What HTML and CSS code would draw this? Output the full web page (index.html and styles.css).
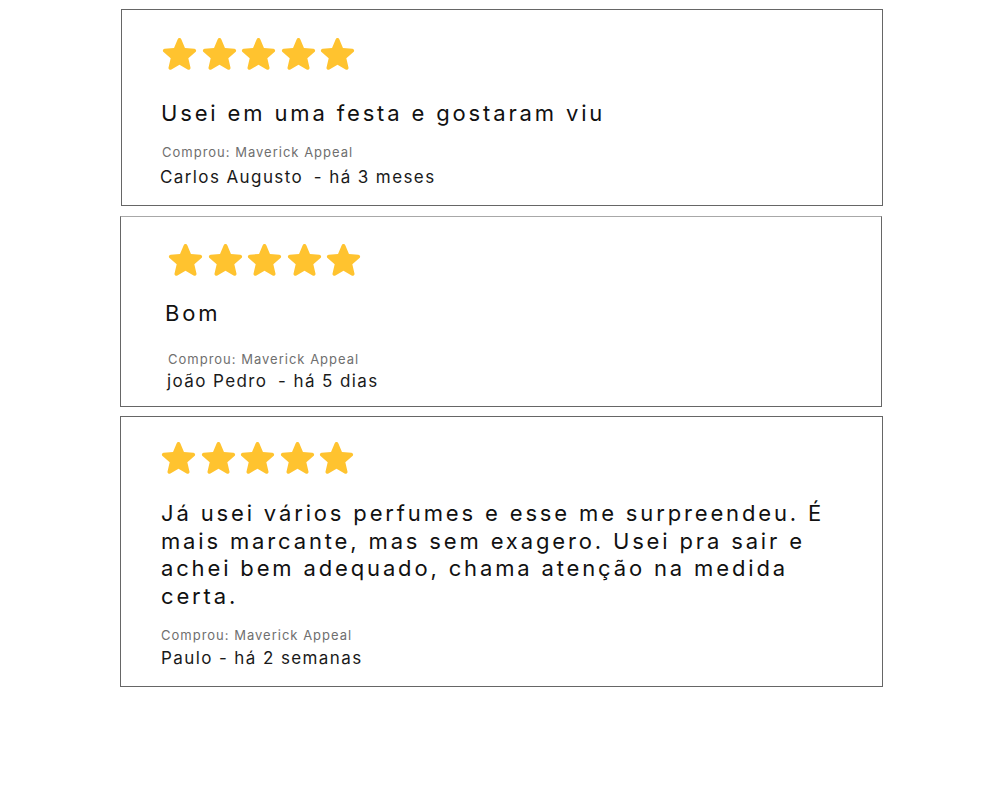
FILE: index.html
```html
<!DOCTYPE html>
<html lang="pt-BR">
<head>
<meta charset="utf-8">
<title>Avaliações</title>
<link rel="stylesheet" href="styles.css">
</head>
<body>
<svg class="defs" width="0" height="0" aria-hidden="true">
  <defs>
    <symbol id="star" viewBox="3 2 18 18">
      <path d="M12 17.27l4.15 2.51c.76.46 1.69-.22 1.49-1.08l-1.1-4.72 3.67-3.18c.67-.58.31-1.68-.57-1.75l-4.83-.41-1.89-4.46c-.34-.81-1.5-.81-1.840 0L9.19 8.63l-4.83.41c-.88.07-1.24 1.17-.57 1.75l3.67 3.18-1.1 4.72c-.2.86.73 1.54 1.49 1.08l4.15-2.5z"/>
    </symbol>
  </defs>
</svg>
<main class="reviews">
  <article class="review review--one">
    <div class="stars">
      <svg class="star"><use href="#star"/></svg>
      <svg class="star"><use href="#star"/></svg>
      <svg class="star"><use href="#star"/></svg>
      <svg class="star"><use href="#star"/></svg>
      <svg class="star"><use href="#star"/></svg>
    </div>
    <p class="review-text">Usei em uma festa e gostaram viu</p>
    <p class="bought">Comprou: Maverick Appeal</p>
    <p class="author">Carlos Augusto&thinsp; - há 3 meses</p>
  </article>
  <article class="review review--two">
    <div class="stars">
      <svg class="star"><use href="#star"/></svg>
      <svg class="star"><use href="#star"/></svg>
      <svg class="star"><use href="#star"/></svg>
      <svg class="star"><use href="#star"/></svg>
      <svg class="star"><use href="#star"/></svg>
    </div>
    <p class="review-text">Bom</p>
    <p class="bought">Comprou: Maverick Appeal</p>
    <p class="author">joão Pedro&thinsp; - há 5 dias</p>
  </article>
  <article class="review review--three">
    <div class="stars">
      <svg class="star"><use href="#star"/></svg>
      <svg class="star"><use href="#star"/></svg>
      <svg class="star"><use href="#star"/></svg>
      <svg class="star"><use href="#star"/></svg>
      <svg class="star"><use href="#star"/></svg>
    </div>
    <p class="review-text">Já usei vários perfumes e esse me surpreendeu. É mais marcante, mas sem exagero. Usei pra sair e achei bem adequado, chama atenção na medida certa.</p>
    <p class="bought">Comprou: Maverick Appeal</p>
    <p class="author">Paulo - há 2 semanas</p>
  </article>
</main>
</body>
</html>
```

FILE: styles.css
```css
html, body {
  margin: 0;
  padding: 0;
  background: #ffffff;
}

body {
  font-family: "Inter", "Noto Sans", sans-serif;
  color: #111111;
}

.defs {
  position: absolute;
  width: 0;
  height: 0;
  overflow: hidden;
}

.reviews {
  display: flex;
  flex-direction: column;
  gap: 10px;
  width: 763px;
  margin-left: 120px;
  padding-top: 9px;
}

.review {
  border: 1px solid #666666;
  box-sizing: border-box;
  display: flex;
  flex-direction: column;
  align-items: flex-start;
}

.review p {
  margin: 0;
}

.stars {
  display: flex;
  gap: 4.5px;
  height: 34px;
}

.star {
  width: 35px;
  height: 35px;
  fill: #ffc32f;
  margin-top: -2px;
}

.review-text {
  font-size: 22px;
  line-height: 27.5px;
  letter-spacing: 2.85px;
  color: #111111;
  max-width: 690px;
}

.bought {
  font-size: 13px;
  line-height: 16px;
  letter-spacing: 1px;
  color: #6f6f6f;
}

.author {
  font-size: 17px;
  line-height: 22px;
  letter-spacing: 1.4px;
  color: #1a1a1a;
}

/* card 1 */
.review--one {
  width: 762px;
  margin-left: 1px;
  height: 197px;
  padding: 27px 40px 0 38px;
}
.review--one .stars { margin-left: 2px; }
.review--one .review-text { margin-top: 29px; margin-left: 1px; }
.review--one .bought { margin-top: 16px; margin-left: 2px; }
.review--one .author { margin-top: 6px; }

/* card 2 */
.review--two {
  width: 762px;
  height: 191px;
  padding: 26px 40px 0 44px;
  border-top-color: #a8a8a8;
}
.review--two .stars { margin-left: 3px; }
.review--two .review-text { margin-top: 23px; }
.review--two .bought { margin-top: 23px; margin-left: 3px; }
.review--two .author { margin-top: 3px; margin-left: 2px; }

/* card 3 */
.review--three {
  width: 763px;
  height: 271px;
  margin-top: -1px;
  padding: 24px 40px 0 40px;
}
.review--three .review-text { margin-top: 25px; }
.review--three .bought { margin-top: 17px; }
.review--three .author { margin-top: 4px; }
```
